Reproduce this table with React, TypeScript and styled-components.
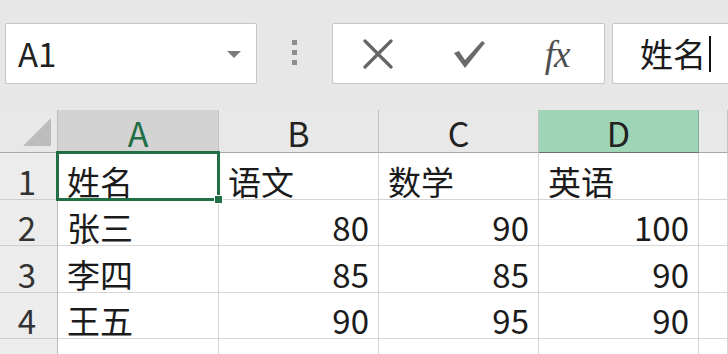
import styled, { createGlobalStyle } from "styled-components";

const GlobalStyle = createGlobalStyle`
  html, body {
    margin: 0;
    padding: 0;
    background: #e7e7e7;
  }
  body {
    font-family: "Noto Sans CJK SC", "Liberation Sans", sans-serif;
    color: #1b1b1b;
  }
`;

const Page = styled.div`
  width: 728px;
  height: 354px;
  overflow: hidden;
  display: flex;
  flex-direction: column;
  background: #e7e7e7;
`;

const Toolbar = styled.div`
  flex: none;
  height: 110px;
  box-sizing: border-box;
  padding: 23px 0 0 5px;
  display: flex;
  align-items: flex-start;
`;

const Box = styled.div`
  height: 61px;
  box-sizing: border-box;
  background: #fff;
  border: 1px solid #c6c6c6;
  border-radius: 2px;
  display: flex;
  align-items: center;
  flex: none;
`;

const NameBox = styled(Box)`
  width: 252px;
  justify-content: space-between;
  padding: 0 15px 0 12px;
  font-family: "Noto Sans CJK SC", sans-serif;
  font-size: 33px;
  line-height: 1;
  color: #222;
`;

const Caret = styled.span`
  width: 0;
  height: 0;
  border-left: 7px solid transparent;
  border-right: 7px solid transparent;
  border-top: 7px solid #7a7a7a;
  margin-top: 2px;
`;

const Grip = styled.div`
  display: flex;
  flex-direction: column;
  gap: 5px;
  margin: 17px 35px 0 35px;
`;

const GripDot = styled.span`
  width: 5px;
  height: 5px;
  background: #8e8e8e;
`;

const FormulaButtons = styled(Box)`
  width: 273px;
  padding-left: 29px;
`;

const IconSlot = styled.span<{ $w: number; $gap: number }>`
  width: ${(p) => p.$w}px;
  margin-right: ${(p) => p.$gap}px;
  display: flex;
  align-items: center;
  justify-content: center;
`;

const FxText = styled.span`
  font-family: "Liberation Serif", serif;
  font-style: italic;
  font-size: 37px;
  line-height: 1;
  color: #4e4e4e;
  letter-spacing: -1px;
  margin-top: 2px;
`;

const FormulaInput = styled(Box)`
  width: 160px;
  margin-left: 7px;
  padding-left: 27px;
  font-size: 33px;
  line-height: 1;
  color: #1b1b1b;
`;

const Cursor = styled.span`
  width: 2px;
  height: 36px;
  background: #111;
  margin-left: 3px;
`;

const Sheet = styled.div`
  display: grid;
  grid-template-columns: 58px 161px 160px 160px 160px 1fr;
  grid-template-rows: 43px 47px 46px 47px 46px 46px;
  background: #fff;
`;

const Corner = styled.div`
  background: #e8e8e8;
  border-right: 1px solid #bdbdbd;
  border-bottom: 1px solid #a8a8a8;
  display: flex;
  align-items: flex-end;
  justify-content: flex-end;
  padding: 0 6px 6px 0;
`;

const Triangle = styled.span`
  width: 0;
  height: 0;
  border-left: 28px solid transparent;
  border-bottom: 28px solid #bcbcbc;
`;

type HeadState = "normal" | "active" | "highlight";

const ColHead = styled.div<{ $state?: HeadState }>`
  background: ${(p) =>
    p.$state === "active" ? "#d3d3d3" : p.$state === "highlight" ? "#9fd5b7" : "#e8e8e8"};
  border-right: 1px solid
    ${(p) => (p.$state === "highlight" ? "#7fae95" : "#c4c4c4")};
  border-bottom: 1px solid
    ${(p) => (p.$state === "highlight" ? "#6d6d6d" : "#a8a8a8")};
  display: flex;
  align-items: flex-end;
  justify-content: center;
  padding-bottom: 2px;
  font-size: 34px;
  line-height: 1;
  color: ${(p) => (p.$state === "active" ? "#216e45" : "#222")};
`;

const RowHead = styled.div`
  background: #ececec;
  border-right: 1px solid #bdbdbd;
  border-bottom: 1px solid #cdcdcd;
  display: flex;
  align-items: flex-end;
  justify-content: center;
  padding: 0 3px 1px 0;
  font-size: 33px;
  line-height: 1;
  color: #333;
`;

const Cell = styled.div<{ $num?: boolean; $selected?: boolean }>`
  position: relative;
  border-right: 1px solid #d6d6d6;
  border-bottom: 1px solid #d6d6d6;
  display: flex;
  align-items: flex-end;
  justify-content: ${(p) => (p.$num ? "flex-end" : "flex-start")};
  padding: 0 9px 1px 9px;
  font-size: 33px;
  line-height: 1;
  color: #1b1b1b;
  white-space: nowrap;
  ${(p) =>
    p.$selected &&
    `
    z-index: 2;
    &::after {
      content: "";
      position: absolute;
      left: -2px;
      top: -2px;
      right: -2px;
      bottom: -2px;
      border: 3px solid #1f7145;
      pointer-events: none;
    }
    &::before {
      content: "";
      position: absolute;
      right: -5px;
      bottom: -5px;
      width: 7px;
      height: 7px;
      background: #1f7145;
      border: 1px solid #fff;
      z-index: 3;
    }
  `}
`;

const columns = ["A", "B", "C", "D"];

const rows: { label: string; values: (string | number)[] }[] = [
  { label: "1", values: ["姓名", "语文", "数学", "英语"] },
  { label: "2", values: ["张三", 80, 90, 100] },
  { label: "3", values: ["李四", 85, 85, 90] },
  { label: "4", values: ["王五", 90, 95, 90] },
  { label: "5", values: ["", "", "", ""] },
];

const headState = (col: string): HeadState =>
  col === "A" ? "active" : col === "D" ? "highlight" : "normal";

export default function App() {
  return (
    <>
      <GlobalStyle />
      <Page>
        <Toolbar>
          <NameBox>
            <span>A1</span>
            <Caret />
          </NameBox>
          <Grip>
            <GripDot />
            <GripDot />
            <GripDot />
          </Grip>
          <FormulaButtons>
            <IconSlot $w={32} $gap={58}>
              <svg width="32" height="30" viewBox="0 0 32 30">
                <path
                  d="M3 2 L29 28 M29 2 L3 28"
                  stroke="#666"
                  strokeWidth="3.2"
                  strokeLinecap="round"
                  fill="none"
                />
              </svg>
            </IconSlot>
            <IconSlot $w={34} $gap={54}>
              <svg width="34" height="30" viewBox="0 0 34 30">
                <path
                  d="M2 14 L7 12 L13 21 L30 2 L33 4 L13 29 Z"
                  fill="#6a6a6a"
                />
              </svg>
            </IconSlot>
            <IconSlot $w={34} $gap={0}>
              <FxText>fx</FxText>
            </IconSlot>
          </FormulaButtons>
          <FormulaInput>
            <span>姓名</span>
            <Cursor />
          </FormulaInput>
        </Toolbar>
        <Sheet>
          <Corner>
            <Triangle />
          </Corner>
          {columns.map((c) => (
            <ColHead key={c} $state={headState(c)}>
              {c}
            </ColHead>
          ))}
          <ColHead />
          {rows.map((r) => (
            <>
              <RowHead key={`h${r.label}`}>{r.label}</RowHead>
              {r.values.map((v, i) => (
                <Cell
                  key={`${r.label}-${i}`}
                  $num={typeof v === "number"}
                  $selected={r.label === "1" && i === 0}
                >
                  {v}
                </Cell>
              ))}
              <Cell key={`${r.label}-e`} />
            </>
          ))}
        </Sheet>
      </Page>
    </>
  );
}
